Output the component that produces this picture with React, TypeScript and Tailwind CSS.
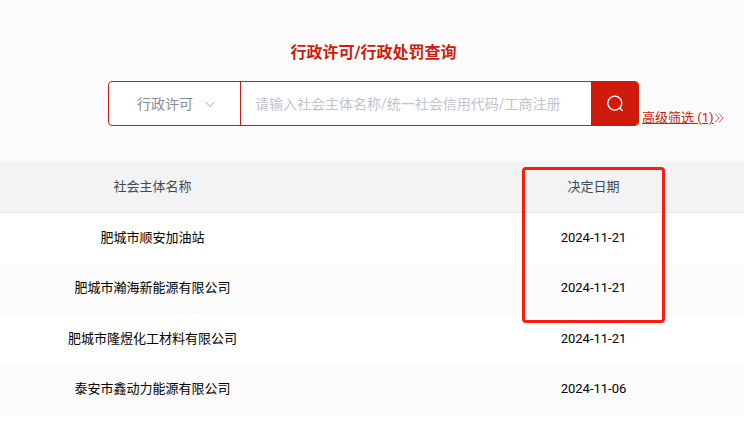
import React from "react";

interface RecordItem {
  name: string;
  date: string;
}

const records: RecordItem[] = [
  { name: "肥城市顺安加油站", date: "2024-11-21" },
  { name: "肥城市瀚海新能源有限公司", date: "2024-11-21" },
  { name: "肥城市隆煜化工材料有限公司", date: "2024-11-21" },
  { name: "泰安市鑫动力能源有限公司", date: "2024-11-06" },
];

const SearchBar: React.FC = () => (
  <form
    className="flex h-[45px] overflow-hidden rounded border border-[#cf1b0c] bg-white text-sm"
    onSubmit={(e) => e.preventDefault()}
  >
    <div className="relative w-[132px] shrink-0 border-r border-[#cf1b0c]">
      <select
        aria-label="查询类型"
        defaultValue="license"
        className="h-full w-full appearance-none bg-transparent pl-7 text-[#888b91] outline-none"
      >
        <option value="license">行政许可</option>
        <option value="penalty">行政处罚</option>
      </select>
      <svg
        viewBox="0 0 12 8"
        className="pointer-events-none absolute top-1/2 right-6 h-2 w-3 -translate-y-1/2"
        fill="none"
        stroke="#c0c4cc"
        strokeWidth="1.2"
      >
        <path d="M1.5 1.8 6 6.3 10.5 1.8" />
      </svg>
    </div>
    <input
      type="text"
      aria-label="查询关键字"
      placeholder="请输入社会主体名称/统一社会信用代码/工商注册"
      className="min-w-0 flex-1 px-3.5 text-[#606266] outline-none placeholder:text-[#c0c4cc]"
    />
    <button
      type="submit"
      aria-label="查询"
      className="flex w-[47px] shrink-0 items-center justify-center bg-[#cf1b0c]"
    >
      <svg
        viewBox="0 0 18 18"
        className="h-[18px] w-[18px]"
        fill="none"
        stroke="white"
        strokeWidth="1.4"
        strokeLinecap="round"
      >
        <circle cx="8.8" cy="8.1" r="7" />
        <path d="M13.8 13.1 16.2 15.5" />
      </svg>
    </button>
  </form>
);

const RecordTable: React.FC = () => (
  <div className="relative">
    <table className="w-full table-fixed border-separate border-spacing-0 text-center text-[13px]">
      <thead>
        <tr className="h-[51px] bg-[#f3f3f3] text-[#3d4a5a]">
          <th className="w-[41%] border-b border-[#dfe6ec] pb-px font-normal">
            社会主体名称
          </th>
          <th className="border-b border-[#dfe6ec] pb-px pl-[138px] font-normal">
            决定日期
          </th>
        </tr>
      </thead>
      <tbody>
        {records.map((r) => (
          <tr
            key={r.name}
            className="h-[51px] bg-white text-black even:h-[50px] even:bg-[#fbfbfb]"
          >
            <td className="pb-0.5">{r.name}</td>
            <td className="pb-0.5 pl-[138px]">{r.date}</td>
          </tr>
        ))}
      </tbody>
    </table>
    {/* highlight around the newest dates */}
    <div className="pointer-events-none absolute top-[5px] left-[70.1%] h-[156px] w-[143px] rounded border-3 border-[#ff1a10]" />
  </div>
);

export default function App() {
  return (
    <main className="min-h-screen bg-white font-[Roboto,'Noto_Sans_CJK_SC',sans-serif]">
      <section className="bg-[#fbfbfb] pt-[41px] pb-9 pl-[3px]">
        <h1 className="text-center text-base leading-6 font-bold text-[#cf1b0c]">
          行政许可/行政处罚查询
        </h1>
        <div className="mt-4 grid grid-cols-[1fr_minmax(0,531px)_1fr]">
          <div className="col-start-2">
            <SearchBar />
          </div>
          <a
            href="#filter"
            className="flex items-center self-end pl-[3px] text-[13px] leading-4 whitespace-nowrap text-[#cf1b0c]"
          >
            <span className="underline">高级筛选 (1)</span>
            <svg
              viewBox="0 0 10 12"
              className="h-3 w-2.5"
              fill="none"
              stroke="#cf6055"
              strokeWidth="1"
            >
              <path d="M1 1.5 5 6 1 10.5M5 1.5 9 6 5 10.5" />
            </svg>
          </a>
        </div>
      </section>
      <RecordTable />
    </main>
  );
}
